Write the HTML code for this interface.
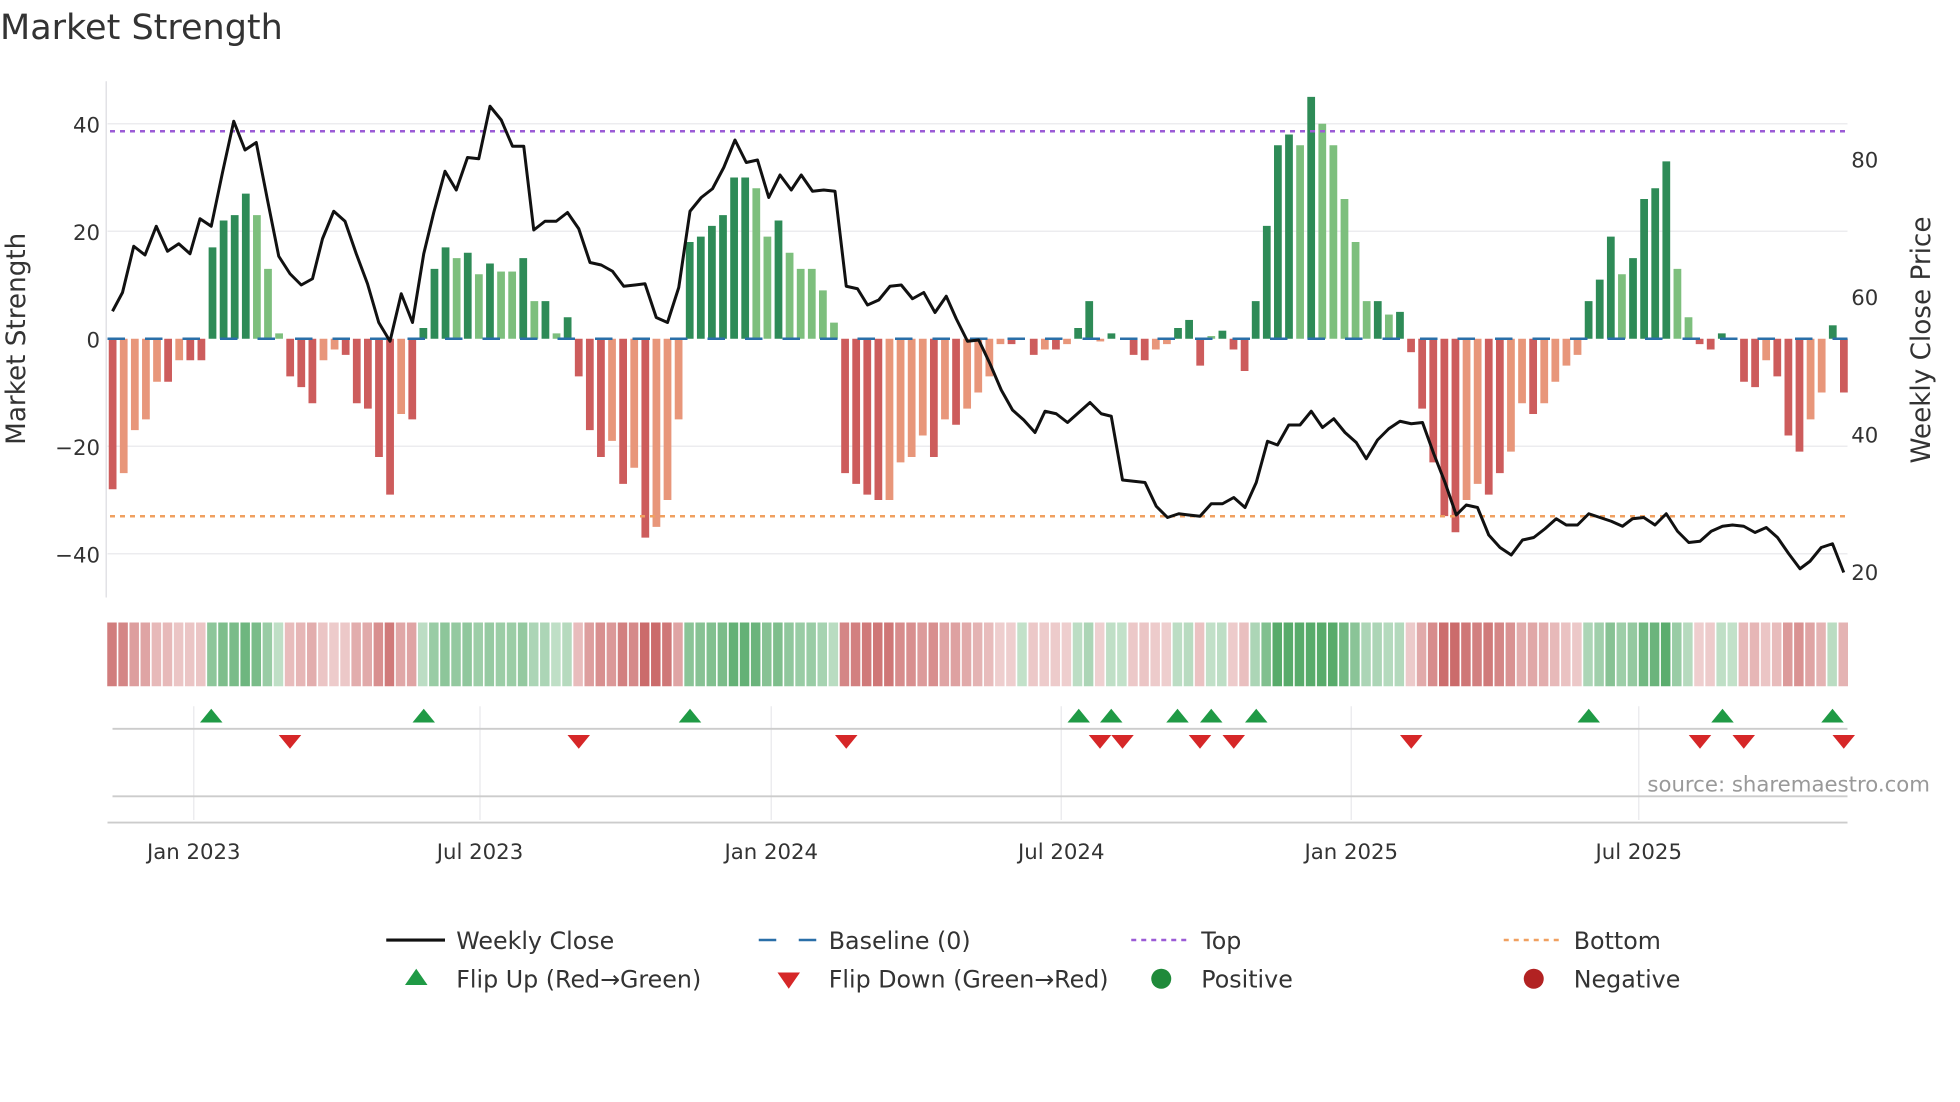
<!DOCTYPE html>
<html><head><meta charset="utf-8"><style>
html,body{margin:0;padding:0;background:#fff;}
svg{display:block;font-family:"DejaVu Sans","Liberation Sans",sans-serif;}
</style></head><body>
<svg id="s" width="1960" height="1102" viewBox="0 0 1568 881.6" xmlns="http://www.w3.org/2000/svg">
<rect width="1568" height="882" fill="#fff"/>
<text x="0" y="31" font-size="28" fill="#333">Market Strength</text>
<g stroke="#ececef" stroke-width="1.2">
<line x1="86" y1="99" x2="1478" y2="99"/><line x1="86" y1="185" x2="1478" y2="185"/>
<line x1="86" y1="357" x2="1478" y2="357"/><line x1="86" y1="443" x2="1478" y2="443"/>
</g>
<line x1="85" y1="65" x2="85" y2="478" stroke="#e2e2e6" stroke-width="1.2"/>
<g font-size="17" fill="#333" text-anchor="end">
<text x="80" y="106">40</text><text x="80" y="192">20</text><text x="80" y="278">0</text>
<text x="80" y="364">−20</text><text x="80" y="450">−40</text>
</g>
<g font-size="17" fill="#333">
<text x="1481" y="134">80</text><text x="1481" y="244">60</text><text x="1481" y="354">40</text><text x="1481" y="464">20</text>
</g>
<text transform="translate(20,271) rotate(-90)" font-size="21" fill="#333" text-anchor="middle">Market Strength</text>
<text transform="translate(1544,272) rotate(-90)" font-size="21" fill="#333" text-anchor="middle">Weekly Close Price</text>
<g id="bars"></g>
<line x1="86" y1="271" x2="1478" y2="271" stroke="#2a6fa8" stroke-width="2" stroke-dasharray="14 16"/>
<line x1="88" y1="105" x2="1478" y2="105" stroke="#9b5bd6" stroke-width="2" stroke-dasharray="4 4"/>
<line x1="88" y1="413" x2="1478" y2="413" stroke="#f0a060" stroke-width="2" stroke-dasharray="4 4"/>
<polyline id="close" fill="none" stroke="#111" stroke-width="2.4" stroke-linejoin="round"/>
<g id="heat"></g>
<g stroke="#ececef" stroke-width="1.2">
<line x1="155" y1="565" x2="155" y2="656"/><line x1="384" y1="565" x2="384" y2="656"/>
<line x1="617" y1="565" x2="617" y2="656"/><line x1="849" y1="565" x2="849" y2="656"/>
<line x1="1081" y1="565" x2="1081" y2="656"/><line x1="1311" y1="565" x2="1311" y2="656"/>
</g>
<line x1="90" y1="583" x2="1478" y2="583" stroke="#ccc" stroke-width="1.5"/>
<line x1="90" y1="637" x2="1478" y2="637" stroke="#ccc" stroke-width="1.5"/>
<line x1="86" y1="658" x2="1478" y2="658" stroke="#ccc" stroke-width="1.5"/>
<g id="flips"></g>
<text x="1544" y="633" font-size="17" fill="#999" text-anchor="end">source: sharemaestro.com</text>
<g font-size="17" fill="#333" text-anchor="middle">
<text x="155" y="687">Jan 2023</text><text x="384" y="687">Jul 2023</text><text x="617" y="687">Jan 2024</text>
<text x="849" y="687">Jul 2024</text><text x="1081" y="687">Jan 2025</text><text x="1311" y="687">Jul 2025</text>
</g>
<g font-size="19" fill="#333">
<line x1="309" y1="752" x2="356" y2="752" stroke="#111" stroke-width="2.5"/>
<text x="365" y="759">Weekly Close</text>
<line x1="607" y1="752" x2="654" y2="752" stroke="#2a6fa8" stroke-width="2" stroke-dasharray="14 18"/>
<text x="663" y="759">Baseline (0)</text>
<line x1="905" y1="752" x2="952" y2="752" stroke="#9b5bd6" stroke-width="2" stroke-dasharray="4 4"/>
<text x="961" y="759">Top</text>
<line x1="1203" y1="752" x2="1250" y2="752" stroke="#f0a060" stroke-width="2" stroke-dasharray="4 4"/>
<text x="1259" y="759">Bottom</text>
<polygon points="324,788 342,788 333,775" fill="#1f9a45"/>
<text x="365" y="790">Flip Up (Red→Green)</text>
<polygon points="622,778 640,778 631,791" fill="#d62728"/>
<text x="663" y="790">Flip Down (Green→Red)</text>
<circle cx="929" cy="783" r="8" fill="#1f8a3a"/>
<text x="961" y="790">Positive</text>
<circle cx="1227" cy="783" r="8" fill="#b22222"/>
<text x="1259" y="790">Negative</text>
</g>
</svg>
<script>
var v=[[-28,1],[-25,0],[-17,0],[-15,0],[-8,0],[-8,1],[-4,0],[-4,1],[-4,1],[17,1],[22,1],[23,1],[27,1],[23,0],[13,0],[1,0],[-7,1],[-9,1],[-12,1],[-4,0],[-2,0],[-3,1],[-12,1],[-13,1],[-22,1],[-29,1],[-14,0],[-15,1],[2,1],[13,1],[17,1],[15,0],[16,1],[12,0],[14,1],[12.5,0],[12.5,0],[15,1],[7,0],[7,1],[1,0],[4,1],[-7,1],[-17,1],[-22,1],[-19,0],[-27,1],[-24,0],[-37,1],[-35,0],[-30,0],[-15,0],[18,1],[19,1],[21,1],[23,1],[30,1],[30,1],[28,0],[19,0],[22,1],[16,0],[13,0],[13,0],[9,0],[3,0],[-25,1],[-27,1],[-29,1],[-30,1],[-30,0],[-23,0],[-22,0],[-18,0],[-22,1],[-15,0],[-16,1],[-13,0],[-10,0],[-7,0],[-1,0],[-1,1],[0,1],[-3,1],[-2,0],[-2,1],[-1,0],[2,1],[7,1],[-0.5,0],[1,1],[0,1],[-3,1],[-4,1],[-2,0],[-1,0],[2,1],[3.5,1],[-5,1],[0.5,0],[1.5,1],[-2,1],[-6,1],[7,1],[21,1],[36,1],[38,1],[36,0],[45,1],[40,0],[36,0],[26,0],[18,0],[7,0],[7,1],[4.5,0],[5,1],[-2.5,1],[-13,1],[-23,1],[-33,1],[-36,1],[-30,0],[-27,0],[-29,1],[-25,1],[-21,0],[-12,0],[-14,1],[-12,0],[-8,0],[-5,0],[-3,0],[7,1],[11,1],[19,1],[12,0],[15,1],[26,1],[28,1],[33,1],[13,0],[4,0],[-1,1],[-2,1],[1,1],[0,1],[-8,1],[-9,1],[-4,0],[-7,1],[-18,1],[-21,1],[-15,0],[-10,0],[2.5,1],[-10,1]];
var NS="http://www.w3.org/2000/svg",b=document.getElementById('bars'),h=document.getElementById('heat');
var x0=90,dx=(1475-90)/(v.length-1);
function el(p,t,a){var e=document.createElementNS(NS,t);for(var k in a)e.setAttribute(k,a[k]);p.appendChild(e);return e;}
v.forEach(function(d,i){var x=x0+i*dx,val=d[0],y=271-val*4.3;
var c=val>=0?(d[1]?'#2e8b57':'#7dbf7d'):(d[1]?'#cd5c5c':'#e8967a');
if(Math.abs(val)>0.2)el(b,'rect',{x:x-3,y:Math.min(y,271),width:6.2,height:Math.abs(val*4.3),fill:c});
var a=Math.min(1,0.15+Math.abs(val)/40);
var hc=val>=0?'rgba(46,150,70,'+(0.2+0.6*a)+')':'rgba(190,70,70,'+(0.15+0.65*a)+')';
el(h,'rect',{x:x-4.4,y:498,width:8.8,height:51,fill:'#fff'});
el(h,'rect',{x:x-4.2,y:498,width:7.6,height:51,fill:hc});
});
var pts=[[90,249],[98,234],[107,197],[116,204],[125,181],[134,201],[143,195],[152,203],[160,175],[169,181],[178,138],[187,97],[196,120],[205,114],[214,160],[223,205],[232,219],[241,228],[250,223],[258,191],[267,169],[276,177],[285,203],[294,227],[303,258],[312,273],[321,235],[330,258],[339,203],[347,170],[356,137],[365,152],[374,126],[383,127],[392,85],[401,96],[410,117],[419,117],[427,184],[436,177],[445,177],[454,170],[463,183],[472,210],[481,212],[490,217],[499,229],[508,228],[516,227],[525,254],[534,258],[543,230],[552,169],[561,158],[570,151],[579,134],[588,112],[597,130],[606,128],[615,158],[624,140],[633,152],[641,140],[650,153],[659,152],[668,153],[677,229],[686,231],[694,244],[703,240],[712,229],[721,228],[730,239],[739,234],[748,250],[757,237],[765,255],[774,273],[783,272],[792,291],[801,312],[810,328],[819,336],[828,346],[836,329],[845,331],[854,338],[863,330],[872,322],[881,331],[889,333],[898,384],[907,385],[916,386],[925,405],[934,414],[943,411],[951,412],[960,413],[969,403],[978,403],[987,398],[996,406],[1005,386],[1014,353],[1022,356],[1031,340],[1040,340],[1049,329],[1058,342],[1067,335],[1076,346],[1085,354],[1093,367],[1102,352],[1111,343],[1120,337],[1129,339],[1138,338],[1147,363],[1156,386],[1165,412],[1173,404],[1182,406],[1191,428],[1200,438],[1209,444],[1218,432],[1227,430],[1236,423],[1245,415],[1253,420],[1262,420],[1271,411],[1280,414],[1289,417],[1298,421],[1306,415],[1315,414],[1324,420],[1333,411],[1342,425],[1351,434],[1360,433],[1369,425],[1378,421],[1386,420],[1395,421],[1404,426],[1413,422],[1422,430],[1431,443],[1440,455],[1448,449],[1457,438],[1466,435],[1475,458]];
document.getElementById('close').setAttribute('points',pts.map(function(p){return p.join(',')}).join(' '));
var f=document.getElementById('flips');
[169,339,552,863,889,942,969,1005,1271,1378,1466].forEach(function(x){el(f,'polygon',{points:(x-9)+',578 '+(x+9)+',578 '+x+',567',fill:'#1f9a45'});});
[232,463,677,880,898,960,987,1129,1360,1395,1475].forEach(function(x){el(f,'polygon',{points:(x-9)+',588 '+(x+9)+',588 '+x+',599',fill:'#d62728'});});
</script>
</body></html>
